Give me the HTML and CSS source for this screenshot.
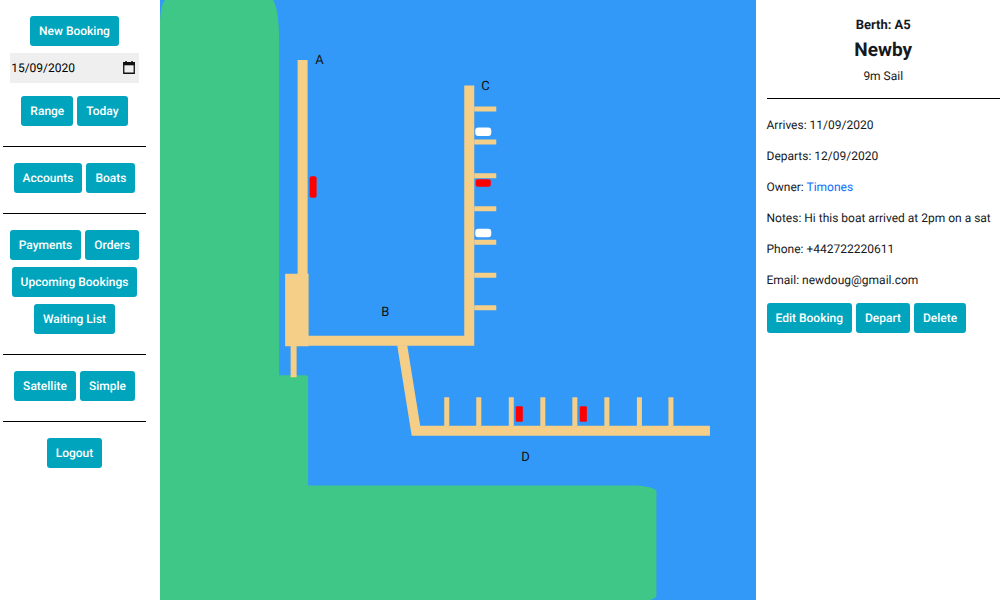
FILE: index.html
```html
<!DOCTYPE html>
<html lang="en-GB">
<head>
<meta charset="utf-8">
<title>Marina bookings</title>
<link rel="stylesheet" href="styles.css">
</head>
<body>
<div class="app">
  <nav class="sidebar">
    <div class="group">
      <div class="row"><button class="btn">New Booking</button></div>
      <div class="date-field">
        <input class="date-input" type="text" value="15/09/2020" aria-label="Booking date">
        <button class="date-picker" aria-label="Open calendar">
          <svg width="12" height="14" viewBox="0 0 12 14"><path d="M3 0v2M9 0v2" stroke="#111" stroke-width="1.5"/><path d="M.75 1.75h10.5v10.5H.75z" fill="none" stroke="#111" stroke-width="1.3"/><path d="M0 1.3h12v3H0z" fill="#111"/></svg>
        </button>
      </div>
      <div class="row"><button class="btn">Range</button><button class="btn">Today</button></div>
    </div>
    <div class="group">
      <div class="row"><button class="btn">Accounts</button><button class="btn">Boats</button></div>
    </div>
    <div class="group">
      <div class="row"><button class="btn">Payments</button><button class="btn">Orders</button></div>
      <div class="row"><button class="btn">Upcoming Bookings</button></div>
      <div class="row"><button class="btn">Waiting List</button></div>
    </div>
    <div class="group">
      <div class="row"><button class="btn">Satellite</button><button class="btn">Simple</button></div>
    </div>
    <div class="group">
      <div class="row"><button class="btn">Logout</button></div>
    </div>
  </nav>

  <main class="map">
    <svg class="map-canvas" viewBox="160 0 595 600" preserveAspectRatio="xMinYMin meet" role="img" aria-label="Marina map">
      <g class="land">
        <path d="M160 20Q161 4 165 0H273Q279 10 279 40V375H306Q308 375 308 378V485H636Q652 486 656 490V596Q653 599 647 600H160z"/>
      </g>
      <g class="pontoon">
        <path d="M297.500 60H307.500V274H297.500z"/>
        <path d="M285 273.500H308.500V346H285z"/>
        <path d="M290.500 345H296.500V377H290.500z"/>
        <path d="M308 335.500H464V85.500H474V345.500H308z"/>
        <path d="M397 345H407L420 425.500H709.500V435.500H411.500z"/>
        <path d="M474 106.500h22v5h-22zM474 139.500h22v5h-22zM474 173h22v5h-22zM474 206h22v5h-22zM474 239.500h22v5h-22zM474 272.500h22v5h-22zM474 305h22v5h-22z"/>
        <path d="M444 397h5v29h-5zM476 397h5v29h-5zM508.500 397h5v29h-5zM540 397h5v29h-5zM572 397h5v29h-5zM604 397h5v29h-5zM636.500 397h5v29h-5zM668 397h5v29h-5z"/>
      </g>
      <g class="boat-booked">
        <rect x="309.500" y="176" width="7" height="21.500" rx="2"/>
        <rect x="475.500" y="179" width="15" height="7.500" rx="2"/>
        <rect x="515.500" y="406" width="7" height="15.500" rx="1"/>
        <rect x="579.500" y="406" width="7" height="15.500" rx="1"/>
      </g>
      <g class="boat-free">
        <rect x="475" y="127.500" width="16" height="8.500" rx="3"/>
        <rect x="475" y="228.500" width="16" height="8.500" rx="3"/>
      </g>
      <g class="map-label">
        <text x="315" y="64">A</text>
        <text x="381" y="316">B</text>
        <text x="481" y="90">C</text>
        <text x="521" y="461">D</text>
      </g>
    </svg>
  </main>

  <aside class="details">
    <header class="details-head">
      <p class="berth">Berth: A5</p>
      <h1 class="boat-name">Newby</h1>
      <p class="boat-type">9m Sail</p>
    </header>
    <div class="facts">
      <p>Arrives: 11/09/2020</p>
      <p>Departs: 12/09/2020</p>
      <p>Owner: <a class="owner" href="#">Timones</a></p>
      <p>Notes: Hi this boat arrived at 2pm on a sat</p>
      <p>Phone: +442722220611</p>
      <p>Email: newdoug@gmail.com</p>
    </div>
    <div class="actions"><button class="btn">Edit Booking</button><button class="btn">Depart</button><button class="btn">Delete</button></div>
  </aside>
</div>
</body>
</html>
```
FILE: styles.css
```css
* { box-sizing: border-box; }
body {
  margin: 0;
  font: 12px/20px Roboto, "Liberation Sans", sans-serif;
  text-rendering: geometricPrecision;
  color: #16191d;
  background: #fff;
}
p, h1 { margin: 0; }
.app {
  display: grid;
  grid-template-columns: minmax(0, 320fr) minmax(0, 1191fr) minmax(0, 489fr);
  min-height: 100vh;
}
.sidebar { padding: 0 14px 0 3px; }
.group {
  display: flex;
  flex-direction: column;
  align-items: center;
  gap: 7px;
  padding: 16px 0 20px;
  border-bottom: 1px solid #000;
}
.group:last-child { border-bottom: 0; }
.row, .actions { display: flex; gap: 4px; }
.btn {
  font: 500 12px/20px Roboto, "Liberation Sans", sans-serif;
  text-rendering: inherit;
  color: #fff;
  background: #00a5bd;
  border: 0;
  border-radius: 3px;
  padding: 5px 9px;
  white-space: nowrap;
}
.date-field {
  display: flex;
  align-items: center;
  width: 90%;
  height: 30px;
  margin-bottom: 6px;
  padding: 0 4px 0 1px;
  background: #efefef;
}
.date-input {
  flex: 1;
  min-width: 0;
  padding: 0;
  border: 0;
  background: transparent;
  font: inherit;
  text-rendering: inherit;
  color: #000;
}
.date-picker {
  display: flex;
  padding: 0;
  border: 0;
  background: transparent;
}
.map { background: #3399f8; }
.map-canvas { display: block; width: 100%; }
.land { fill: #3ec786; }
.pontoon { fill: #f5cf87; }
.boat-booked { fill: #f00; }
.boat-free { fill: #fff; }
.map-label { fill: #111; font-size: 13px; }
.details { padding: 16px 0 0 11px; }
.details-head {
  text-align: center;
  padding-bottom: 12px;
  border-bottom: 1px solid #000;
}
.berth { font-size: 13px; font-weight: 700; }
.boat-name { font-size: 19px; line-height: 28px; margin-bottom: 2px; }
.facts {
  display: grid;
  gap: 11px;
  padding: 16px 0 13px;
}
.owner { color: #0d6efd; text-decoration: none; }
```
